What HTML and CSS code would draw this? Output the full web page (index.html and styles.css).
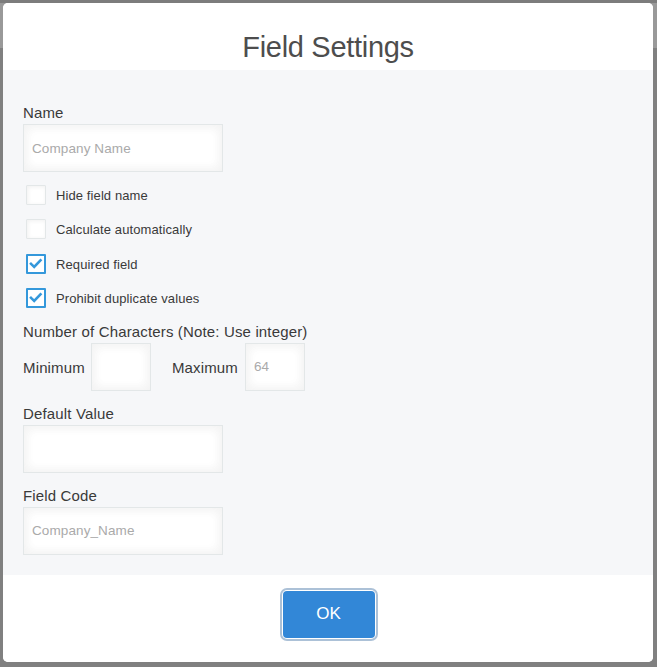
FILE: index.html
```html
<!DOCTYPE html>
<html>
<head>
<meta charset="utf-8">
<link rel="stylesheet" href="styles.css">
</head>
<body>
<div class="modal">
  <div class="modal-header">
    <h1 class="title">Field Settings</h1>
  </div>
  <div class="modal-body">
    <div class="label">Name</div>
    <div class="input input-wide"><span class="placeholder">Company Name</span></div>

    <div class="checks">
      <div class="check-row"><span class="box"></span><span class="check-text">Hide field name</span></div>
      <div class="check-row"><span class="box"></span><span class="check-text">Calculate automatically</span></div>
      <div class="check-row"><span class="box checked"><svg viewBox="0 0 20 20" width="20" height="20"><path d="M5 9.8 L8.2 13 L14.5 6.3" fill="none" stroke="#3498db" stroke-width="2.6" stroke-linecap="square"/></svg></span><span class="check-text">Required field</span></div>
      <div class="check-row"><span class="box checked"><svg viewBox="0 0 20 20" width="20" height="20"><path d="M5 9.8 L8.2 13 L14.5 6.3" fill="none" stroke="#3498db" stroke-width="2.6" stroke-linecap="square"/></svg></span><span class="check-text">Prohibit duplicate values</span></div>
    </div>

    <div class="label label-chars">Number of Characters (Note: Use integer)</div>
    <div class="minmax">
      <span class="mm-label">Minimum</span>
      <div class="input input-small"></div>
      <span class="mm-label mm-max">Maximum</span>
      <div class="input input-small"><span class="placeholder">64</span></div>
    </div>

    <div class="label label-spaced">Default Value</div>
    <div class="input input-wide"></div>

    <div class="label label-spaced">Field Code</div>
    <div class="input input-wide"><span class="placeholder">Company_Name</span></div>
  </div>
  <div class="modal-footer">
    <button class="ok-btn">OK</button>
  </div>
</div>
</body>
</html>
```

FILE: styles.css
```css
html, body {
  margin: 0;
  padding: 0;
}
body {
  width: 657px;
  height: 667px;
  box-sizing: border-box;
  padding: 3px 4px 0 3px;
  background: linear-gradient(to bottom, #7c7c7c 0, #7c7c7c 3px, #999999 3px, #999999 48px, #808080 48px);
  font-family: "Liberation Sans", Arial, sans-serif;
  color: #3a3a3a;
  overflow: hidden;
}
.modal {
  width: 650px;
  height: 659px;
  background: #ffffff;
  border-radius: 5px;
  overflow: hidden;
  display: flex;
  flex-direction: column;
}
.modal-header {
  height: 67px;
  box-sizing: border-box;
  padding-top: 27px;
  background: #ffffff;
}
.title {
  margin: 0;
  text-align: center;
  font-size: 29px;
  line-height: 34px;
  font-weight: normal;
  color: #4d4d4d;
  letter-spacing: -0.3px;
}
.modal-body {
  background: #f6f7f9;
  padding: 34px 20px 20px 20px;
  display: flex;
  flex-direction: column;
  align-items: flex-start;
}
.label {
  font-size: 15px;
  line-height: 18px;
  letter-spacing: 0.15px;
  color: #3a3a3a;
  margin-bottom: 2px;
}
.label-chars {
  margin-top: 15px;
}
.label-spaced {
  margin-top: 14px;
}
.input {
  box-sizing: border-box;
  height: 48px;
  border: 1px solid #e3e7e8;
  background: #ffffff;
  box-shadow: inset 1px 1px 12px #f3f3f3, inset -1px -1px 12px #f3f3f3;
  display: flex;
  align-items: center;
  padding-left: 8px;
}
.input-wide {
  width: 200px;
}
.input-small {
  width: 60px;
}
.placeholder {
  font-size: 13.5px;
  color: #aaaaaa;
  letter-spacing: 0.1px;
}
.checks {
  margin-top: 13px;
  display: flex;
  flex-direction: column;
  gap: 14.3px;
}
.check-row {
  display: flex;
  align-items: center;
  height: 20px;
  padding-left: 3px;
}
.box {
  box-sizing: border-box;
  width: 20px;
  height: 20px;
  border: 1px solid #e3e7e8;
  background: #ffffff;
  box-shadow: inset 1px 1px 4px #f0f0f0;
  border-radius: 1px;
  position: relative;
  margin-right: 10px;
}
.box.checked {
  border: 2px solid #3498db;
  box-shadow: none;
}
.box svg {
  position: absolute;
  left: -2px;
  top: -2px;
}
.check-text {
  font-size: 13px;
  letter-spacing: 0.1px;
  color: #3a3a3a;
  padding-top: 1px;
}
.minmax {
  display: flex;
  align-items: center;
  height: 48px;
}
.mm-label {
  font-size: 15px;
  letter-spacing: 0.15px;
  margin-right: 6px;
  padding-top: 1px;
}
.mm-max {
  margin-left: 21px;
  margin-right: 7px;
}
.modal-footer {
  flex: 1;
  background: #ffffff;
  display: flex;
  justify-content: center;
  align-items: flex-start;
  padding-top: 16px;
}
.ok-btn {
  width: 92px;
  height: 47px;
  border: none;
  border-radius: 4px;
  background: #3287d7;
  color: #ffffff;
  font-family: "Liberation Sans", Arial, sans-serif;
  font-size: 17px;
  box-shadow: 0 0 0 1px #ffffff, 0 0 0 3px #acc1d7;
  cursor: pointer;
  margin-left: 1px;
}
```
